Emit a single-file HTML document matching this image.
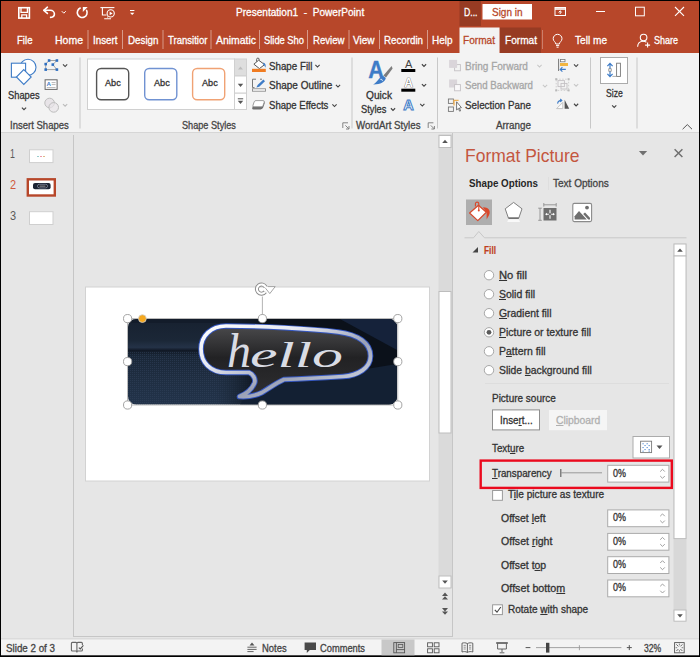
<!DOCTYPE html>
<html><head><meta charset="utf-8"><title>PowerPoint</title>
<style>
html,body{margin:0;padding:0;}
body{width:700px;height:657px;overflow:hidden;position:relative;background:#E6E6E6;font-family:"Liberation Sans",sans-serif;}
.t{position:absolute;white-space:pre;display:block;transform-origin:0 50%;-webkit-text-stroke:0.3px currentColor;}
.t u{text-decoration:underline;text-underline-offset:1px;text-decoration-thickness:1px;}
svg{position:absolute;left:0;top:0;}
</style></head><body>
<svg width="700" height="657" viewBox="0 0 700 657" font-family="Liberation Sans, sans-serif">
<rect x="0" y="0" width="700" height="657" fill="#000"/>
<rect x="1" y="1" width="698" height="654" fill="#E6E6E6"/>
<rect x="1" y="1" width="698" height="52" fill="#B7472A"/>
<rect x="459.5" y="1" width="21.5" height="25" fill="#973B23"/>
<rect x="482.5" y="4" width="49.5" height="15.5" fill="#fff"/>
<rect x="459.5" y="27.5" width="40" height="26" fill="#F3F3F3"/>
<rect x="500" y="27.5" width="41" height="25.5" fill="#973B23"/>
<rect x="87.5" y="30" width="1" height="19" fill="#fff" opacity="0.45"/>
<rect x="122.0" y="30" width="1" height="19" fill="#fff" opacity="0.45"/>
<rect x="162.5" y="30" width="1" height="19" fill="#fff" opacity="0.45"/>
<rect x="210.5" y="30" width="1" height="19" fill="#fff" opacity="0.45"/>
<rect x="259.0" y="30" width="1" height="19" fill="#fff" opacity="0.45"/>
<rect x="307.0" y="30" width="1" height="19" fill="#fff" opacity="0.45"/>
<rect x="348.5" y="30" width="1" height="19" fill="#fff" opacity="0.45"/>
<rect x="379.0" y="30" width="1" height="19" fill="#fff" opacity="0.45"/>
<rect x="427.0" y="30" width="1" height="19" fill="#fff" opacity="0.45"/>
<rect x="542" y="30" width="1" height="19" fill="#fff" opacity="0.3"/>
<rect x="1" y="53" width="698" height="79" fill="#F3F3F3"/>
<rect x="1" y="132" width="698" height="1" fill="#D6D6D6"/>
<rect x="79.5" y="57.5" width="1" height="71" fill="#C8C8C8"/>
<rect x="351.5" y="57.5" width="1" height="71" fill="#C8C8C8"/>
<rect x="437.0" y="57.5" width="1" height="71" fill="#C8C8C8"/>
<rect x="590.0" y="57.5" width="1" height="71" fill="#C8C8C8"/>
<rect x="636.5" y="57.5" width="1" height="71" fill="#C8C8C8"/>
<rect x="87.5" y="59" width="147" height="50.5" fill="#fff" stroke="#D0D0D0" stroke-width="1"/>
<rect x="96.60000000000001" y="68.5" width="32.1" height="31.2" rx="4.5" fill="#fff" stroke="#555" stroke-width="1.4"/>
<rect x="144.7" y="68.5" width="32.1" height="31.2" rx="4.5" fill="#fff" stroke="#7092D2" stroke-width="1.4"/>
<rect x="192.6" y="68.5" width="32.1" height="31.2" rx="4.5" fill="#fff" stroke="#F0A274" stroke-width="1.4"/>
<rect x="234.5" y="59" width="12" height="17" fill="#DEDEDE" stroke="#D0D0D0" stroke-width="1"/>
<rect x="234.5" y="76" width="12" height="17.2" fill="#fff" stroke="#D0D0D0" stroke-width="1"/>
<rect x="234.5" y="93.2" width="12" height="16.3" fill="#fff" stroke="#D0D0D0" stroke-width="1"/>
<path d="M238 69.5 L240.5 66.5 L243 69.5 Z" fill="#BDBDBD"/>
<path d="M237.8 83.8 L243.2 83.8 L240.5 87 Z" fill="#555"/>
<rect x="237.8" y="98.3" width="5.4" height="1" fill="#555"/><path d="M237.8 100.8 L243.2 100.8 L240.5 104 Z" fill="#555"/>
<rect x="600.5" y="57.5" width="27" height="26" fill="#fff" stroke="#ABABAB" stroke-width="1"/>
<rect x="73" y="135" width="1" height="502" fill="#C6C6C6"/>
<rect x="74" y="636" width="379" height="1" fill="#C6C6C6"/>
<rect x="452" y="133" width="1" height="504" fill="#C6C6C6"/>
<rect x="29.5" y="149.8" width="23.5" height="12.8" fill="#fff" stroke="#CFCFCF"/>
<rect x="37" y="156" width="2" height="1" fill="#9cc"/><rect x="40" y="156" width="2" height="1" fill="#e9a"/><rect x="43" y="156" width="2" height="1" fill="#db8"/>
<rect x="27.8" y="179.3" width="27" height="16.2" fill="#fff" stroke="#B7472A" stroke-width="2.4"/>
<rect x="33" y="183" width="17.6" height="6.2" rx="2" fill="#1C2433"/>
<rect x="37.5" y="184.3" width="10" height="3.6" rx="1.8" fill="#15181f" stroke="#aab2cc" stroke-width="0.6"/><rect x="39.5" y="185.6" width="6" height="1" fill="#b8bcc8" opacity="0.8"/>
<rect x="29.5" y="211.7" width="23.5" height="12.8" fill="#fff" stroke="#CFCFCF"/>
<rect x="85.5" y="287" width="344" height="194" fill="#fff" stroke="#D2D2D2"/>
<rect x="438.5" y="134" width="13.5" height="454" fill="#DADADA"/>
<rect x="439" y="135.5" width="12" height="12" fill="#fff" stroke="#BEBEBE"/>
<path d="M442.2 143 L447.8 143 L445 139.8 Z" fill="#555"/>
<rect x="439" y="291.5" width="12" height="141.5" fill="#fff" stroke="#BDBDBD"/>
<rect x="439" y="576" width="12" height="12" fill="#fff" stroke="#BEBEBE"/>
<path d="M442.2 580.5 L447.8 580.5 L445 583.8 Z" fill="#555"/>
<path d="M442 596 L445 592.6 L448 596 Z M442 599.6 L445 596.2 L448 599.6 Z" fill="#555"/>
<path d="M442 608 L445 611.4 L448 608 Z M442 611.4 L445 614.8 L448 611.4 Z" fill="#555"/>
<rect x="466" y="199.5" width="26" height="25.5" fill="#AEAEAE"/>
<path d="M464.5 237.8 H473.5 L478.8 231.5 L484.5 237.8 H686.5" fill="none" stroke="#C8C8C8" stroke-width="1"/>
<rect x="548" y="177" width="1" height="13" fill="#DEDEDE"/>
<path d="M478 247 V252.5 H472.5 Z" fill="#444"/>
<rect x="673.5" y="243.5" width="13" height="377" fill="#D8D8D8"/>
<rect x="674" y="244" width="12" height="12" fill="#fff" stroke="#BEBEBE"/>
<path d="M677.2 251.8 L682.8 251.8 L680 248.6 Z" fill="#555"/>
<rect x="674" y="256" width="12" height="282.6" fill="#fff" stroke="#BEBEBE"/>
<rect x="674" y="610" width="12" height="11.2" fill="#fff" stroke="#BEBEBE"/>
<path d="M677.2 614.2 L682.8 614.2 L680 617.4 Z" fill="#555"/>
<circle cx="489" cy="275.2" r="4.7" fill="#fff" stroke="#A8A8A8" stroke-width="1"/>
<circle cx="489" cy="294.2" r="4.7" fill="#fff" stroke="#A8A8A8" stroke-width="1"/>
<circle cx="489" cy="313.2" r="4.7" fill="#fff" stroke="#A8A8A8" stroke-width="1"/>
<circle cx="489" cy="332.3" r="4.7" fill="#fff" stroke="#A8A8A8" stroke-width="1"/>
<circle cx="489" cy="351.3" r="4.7" fill="#fff" stroke="#A8A8A8" stroke-width="1"/>
<circle cx="489" cy="370.2" r="4.7" fill="#fff" stroke="#A8A8A8" stroke-width="1"/>
<circle cx="489" cy="332.3" r="2.4" fill="#5A5A5A"/>
<rect x="485" y="383" width="184" height="1" fill="#DDDDDD"/>
<rect x="492.5" y="409.9" width="47" height="20" fill="#fff" stroke="#8E8E8E"/>
<rect x="549" y="410" width="58" height="20.2" fill="#F5F5F5"/>
<rect x="633" y="436.5" width="36.5" height="21.5" fill="#fff" stroke="#ABABAB"/>
<path d="M656.5 445.5 L662.5 445.5 L659.5 449 Z" fill="#555"/>
<rect x="607.7" y="465.3" width="61.2" height="16.8" fill="#fff" stroke="#ABABAB"/>
<path d="M660.2 471.6 L662.5 469.3 L664.8 471.6" fill="none" stroke="#959595" stroke-width="0.9"/>
<path d="M660.2 476.0 L662.5 478.3 L664.8 476.0" fill="none" stroke="#959595" stroke-width="0.9"/>
<rect x="607.7" y="509.9" width="61.2" height="16.8" fill="#fff" stroke="#ABABAB"/>
<path d="M660.2 516.1999999999999 L662.5 513.9 L664.8 516.1999999999999" fill="none" stroke="#959595" stroke-width="0.9"/>
<path d="M660.2 520.6 L662.5 522.9 L664.8 520.6" fill="none" stroke="#959595" stroke-width="0.9"/>
<rect x="607.7" y="533.4" width="61.2" height="16.8" fill="#fff" stroke="#ABABAB"/>
<path d="M660.2 539.6999999999999 L662.5 537.4 L664.8 539.6999999999999" fill="none" stroke="#959595" stroke-width="0.9"/>
<path d="M660.2 544.1 L662.5 546.4 L664.8 544.1" fill="none" stroke="#959595" stroke-width="0.9"/>
<rect x="607.7" y="556.7" width="61.2" height="16.8" fill="#fff" stroke="#ABABAB"/>
<path d="M660.2 563.0 L662.5 560.7 L664.8 563.0" fill="none" stroke="#959595" stroke-width="0.9"/>
<path d="M660.2 567.4000000000001 L662.5 569.7 L664.8 567.4000000000001" fill="none" stroke="#959595" stroke-width="0.9"/>
<rect x="607.7" y="580.0" width="61.2" height="16.8" fill="#fff" stroke="#ABABAB"/>
<path d="M660.2 586.3 L662.5 584.0 L664.8 586.3" fill="none" stroke="#959595" stroke-width="0.9"/>
<path d="M660.2 590.7 L662.5 593.0 L664.8 590.7" fill="none" stroke="#959595" stroke-width="0.9"/>
<rect x="560.2" y="469" width="1.2" height="8" fill="#666"/><rect x="561" y="472.3" width="41" height="1" fill="#999"/>
<rect x="492.6" y="490.5" width="9.8" height="9.8" fill="#fff" stroke="#9A9A9A"/>
<rect x="492.6" y="604.8" width="9.8" height="9.8" fill="#fff" stroke="#9A9A9A"/>
<path d="M494.8 609.8 L497 612.2 L500.8 607" fill="none" stroke="#444" stroke-width="1.1"/>
<rect x="480.7" y="460.6" width="191.1" height="27.3" fill="none" stroke="#EB0A1E" stroke-width="2.4"/>
<rect x="1" y="638.5" width="698" height="1" fill="#CFCFCF"/>
<rect x="1" y="639.5" width="698" height="15.8" fill="#F3F3F3"/>
<rect x="381.5" y="639.5" width="33" height="15.8" fill="#C8C8C8"/>
<g stroke="#fff" fill="none" stroke-width="1.6"><rect x="18.8" y="7.7" width="10.6" height="10.4"/><path d="M21 7.7 V12.3 H27.4 V7.7" stroke-width="1.3"/><path d="M21.8 18.2 V14.8 H26.6 V18.2" stroke-width="1.3"/></g>
<g stroke="#fff" fill="none" stroke-width="1.6" stroke-linecap="round" stroke-linejoin="round"><path d="M47.4 7.2 L43.8 10.3 L47.4 13.4"/><path d="M44 10.3 H50.2 C53 10.3 54.4 12.2 54.4 13.9 C54.4 15.8 52.8 17.1 50.6 17.4"/></g>
<path d="M61.8 11.2 L63.8 13.2 L65.8 11.2" stroke="#fff" fill="none" stroke-width="1"/>
<path d="M80.2 8.1 A4.9 4.9 0 1 0 86.6 10.4" stroke="#fff" fill="none" stroke-width="1.6" stroke-linecap="round"/><path d="M82.8 7.1 H87.7 L82.8 11.9 Z" fill="#fff"/>
<g stroke="#fff" fill="none" stroke-width="1.1"><path d="M100.4 7.6 H114.4"/><path d="M102.4 7.6 V15 H106.6"/><circle cx="110.7" cy="13.4" r="3.6"/><path d="M107.6 16.6 V17.6 M104.2 18.8 H111"/></g><path d="M109.6 11.5 L112.6 13.4 L109.6 15.3 Z" fill="#fff"/>
<rect x="130" y="10" width="4.4" height="1" fill="#fff"/><path d="M130 12.7 H134.4 L132.2 15 Z" fill="#fff"/>
<g stroke="#fff" fill="none" stroke-width="1"><rect x="555" y="7.5" width="10.5" height="8"/><path d="M555 9 H565.5" stroke-width="1.6"/><path d="M560.2 14 V11 M558.6 12.4 L560.2 10.8 L561.8 12.4"/></g>
<path d="M596 11.5 H605" stroke="#fff" fill="none" stroke-width="1"/>
<rect x="635.5" y="7.2" width="8.8" height="8.6" stroke="#fff" fill="none" stroke-width="1"/>
<path d="M675 7 L684 15.8 M684 7 L675 15.8" stroke="#fff" fill="none" stroke-width="1.1"/>
<g stroke="#fff" fill="none" stroke-width="1"><path d="M555.8 44 C555.8 42 553.2 41.3 553.2 38.7 A4.4 4.4 0 0 1 562 38.7 C562 41.3 559.4 42 559.4 44 Z"/><path d="M556 45.6 H559.2 M556.6 47.2 H558.6"/></g>
<g stroke="#fff" fill="none" stroke-width="1.1"><circle cx="643.6" cy="37.6" r="3.3"/><path d="M637.6 46.8 C637.8 42.8 640.5 41.3 643.2 41.3 C644.6 41.3 645.6 41.6 646.4 42.2"/><path d="M647.6 42.6 V47.6 M645.1 45.1 H650.1"/></g>
<g fill="#fff" stroke="#3E7CC7" stroke-width="1.1"><circle cx="28" cy="67.3" r="8"/><rect x="11.4" y="63.2" width="14.2" height="14"/><path d="M23.8 69.6 L31.2 77 L23.8 84.4 L16.4 77 Z"/></g>
<path d="M21.9 107.65 L24 109.75 L26.1 107.65" fill="none" stroke="#444" stroke-width="1.15"/>
<path d="M49.1 60.5 H56.9 L52.8 64.6 L56.9 69.6 H45.7 V64.1 Z" fill="none" stroke="#9A9A9A" stroke-width="0.9"/>
<rect x="47.800000000000004" y="59.2" width="2.6" height="2.6" fill="#2F6FC0"/>
<rect x="55.6" y="59.2" width="2.6" height="2.6" fill="#2F6FC0"/>
<rect x="44.400000000000006" y="62.8" width="2.6" height="2.6" fill="#2F6FC0"/>
<rect x="51.5" y="63.3" width="2.6" height="2.6" fill="#2F6FC0"/>
<rect x="44.400000000000006" y="68.3" width="2.6" height="2.6" fill="#2F6FC0"/>
<rect x="55.6" y="68.3" width="2.6" height="2.6" fill="#2F6FC0"/>
<path d="M62.99999999999999 64.45 L65.1 66.55 L67.19999999999999 64.45" fill="none" stroke="#444" stroke-width="1.15"/>
<rect x="45.1" y="79.8" width="12" height="9.6" fill="#fff" stroke="#666" stroke-width="1"/>
<text x="46.4" y="86" font-size="6.2" font-weight="bold" fill="#3E7CC7">A</text>
<path d="M51.6 82.6 H55.6 M51.6 84.6 H55.6 M46.8 87.6 H55.6" stroke="#9a9a9a" stroke-width="0.7"/>
<circle cx="49.6" cy="103" r="4.8" fill="#E8E4E8" stroke="#BDBDBD"/><circle cx="53.7" cy="107.4" r="4.8" fill="#E8E4E8" fill-opacity="0.7" stroke="#BDBDBD"/>
<path d="M62.99999999999999 104.05 L65.1 106.14999999999999 L67.19999999999999 104.05" fill="none" stroke="#BDBDBD" stroke-width="1.15"/>
<path d="M258.6 60.2 L264.6 64.6 L259.4 68.6 L253.9 64.2 Z" fill="#fff" stroke="#555" stroke-width="1"/>
<path d="M256.6 61.6 V59.4 A1.3 1.3 0 0 1 259.2 59.4 V60.4" fill="none" stroke="#555" stroke-width="0.9"/>
<path d="M263.2 62.6 C265.6 63.2 266.2 65.4 265.4 67.8 C264.8 66 264.4 65.4 263.4 65 Z" fill="#3E7CC7"/>
<rect x="252" y="68.8" width="13.8" height="3.2" fill="#F07C22"/>
<path d="M315.4 64.95 L317.5 67.05 L319.6 64.95" fill="none" stroke="#444" stroke-width="1.15"/>
<path d="M256 79.2 H252.5 V87.6 H254.5" fill="none" stroke="#777" stroke-width="1"/><path d="M262 79.2 H260" stroke="#777" stroke-width="1"/>
<rect x="252.5" y="88.8" width="13" height="2.4" fill="#fff" stroke="#8A8A8A" stroke-width="0.9"/>
<path d="M257.6 85 L263.4 79.6 L265 81.2 L259.2 86.8 L256.4 87.6 Z" fill="#3E7CC7"/>
<path d="M335.9 84.95 L338 87.05 L340.1 84.95" fill="none" stroke="#444" stroke-width="1.15"/>
<path d="M256 101.6 H263 Q265.2 101.6 264.6 103.6 L263.2 107.6 Q262.6 109.4 260.6 109.4 H253.6 Q251.6 109.4 252.4 107.4 L253.8 103.4 Q254.4 101.6 256 101.6 Z" fill="#6E6E6E"/>
<path d="M256 100.6 H263 Q264.8 100.6 264.2 102.2 L263 105.6 Q262.6 106.8 261.2 106.8 H254 Q252.4 106.8 253 105.2 L254.2 101.8 Q254.6 100.6 256 100.6 Z" fill="#fff" stroke="#8A8A8A" stroke-width="0.8"/>
<path d="M332.4 104.45 L334.5 106.55 L336.6 104.45" fill="none" stroke="#444" stroke-width="1.15"/>
<path d="M342.8 128.0 V122.8 H348.0" fill="none" stroke="#777" stroke-width="0.9"/><path d="M345.40000000000003 125.39999999999999 L348.8 128.8 M349.0 126.0 V129.0 H346.0" fill="none" stroke="#777" stroke-width="0.9"/>
<path d="M428.2 128.0 V122.8 H433.4" fill="none" stroke="#777" stroke-width="0.9"/><path d="M430.8 125.39999999999999 L434.2 128.8 M434.4 126.0 V129.0 H431.4" fill="none" stroke="#777" stroke-width="0.9"/>
<text x="368.2" y="77.6" font-size="24.5" font-weight="bold" fill="#3E7CC7" stroke="#3E7CC7" stroke-width="0.4" textLength="15.6" lengthAdjust="spacingAndGlyphs">A</text>
<path d="M391.6 66 L392.6 68.4 L386 77.4 L383.4 75.4 Z" fill="#7d7d7d"/>
<path d="M383 75.8 L385.8 78 C385 82 380 84.6 373.2 84.4 C377.6 82.4 379 77.2 383 75.8 Z" fill="#3E7CC7"/>
<path d="M380.4 79.4 C381.4 79 382.4 79.6 382.4 80.8" fill="none" stroke="#fff" stroke-width="0.9"/>
<path d="M390.9 108.25 L393 110.35 L395.1 108.25" fill="none" stroke="#444" stroke-width="1.15"/>
<text x="408.7" y="68.4" font-size="11" fill="#444" text-anchor="middle">A</text>
<rect x="401.3" y="69" width="14" height="3" fill="#000"/>
<path d="M421.9 64.25 L424 66.35 L426.1 64.25" fill="none" stroke="#444" stroke-width="1.15"/>
<text x="408.7" y="87.2" font-size="12" fill="#fff" stroke="#555" stroke-width="0.7" text-anchor="middle" font-weight="bold" paint-order="stroke">A</text>
<rect x="401.3" y="88.7" width="14" height="3" fill="#000"/>
<path d="M421.9 84.15 L424 86.25 L426.1 84.15" fill="none" stroke="#444" stroke-width="1.15"/>
<text x="408.5" y="109.6" font-size="14.5" fill="#fff" stroke="#3E7CC7" stroke-width="1" text-anchor="middle" font-weight="bold">A</text>
<path d="M420.2 103.95 L422.3 106.05 L424.40000000000003 103.95" fill="none" stroke="#444" stroke-width="1.15"/>
<rect x="454.6" y="64.6" width="5.8" height="6.2" fill="#F3F3F3" stroke="#C4C0C4" stroke-width="0.9"/><rect x="449.1" y="59.9" width="8" height="8" fill="#DAD5DA"/>
<path d="M537.4 64.95 L539.5 67.05 L541.6 64.95" fill="none" stroke="#C8C8C8" stroke-width="1.15"/>
<rect x="449.1" y="79.5" width="8" height="8" fill="#DAD5DA"/><rect x="454.6" y="84.6" width="5.8" height="6.2" fill="#FAF8FA" stroke="#C4C0C4" stroke-width="0.9"/>
<path d="M542.9 84.95 L545 87.05 L547.1 84.95" fill="none" stroke="#C8C8C8" stroke-width="1.15"/>
<rect x="448.4" y="99" width="5" height="4.4" fill="none" stroke="#777" stroke-width="0.9"/><rect x="448.4" y="107" width="5" height="4.4" fill="none" stroke="#777" stroke-width="0.9"/>
<path d="M454 105.4 V100.4 H458.6" fill="none" stroke="#F0B050" stroke-width="1.3"/>
<path d="M456.6 101.8 V110 L458.4 108.4 L459.6 111.2 L460.6 110.8 L459.4 108 L461.4 107.6 Z" fill="#fff" stroke="#555" stroke-width="0.8"/>
<path d="M558.6 58.8 V71" stroke="#777" stroke-width="1"/>
<rect x="560.4" y="59.4" width="4.6" height="2.4" fill="#fff" stroke="#777" stroke-width="0.8"/>
<rect x="560" y="63" width="8" height="3" fill="#F2B541"/>
<path d="M560.2 69.4 H565.8 M562.4 67.2 L560.2 69.4 L562.4 71.6" fill="none" stroke="#3E7CC7" stroke-width="1.1"/>
<path d="M574.0 64.45 L576.1 66.55 L578.2 64.45" fill="none" stroke="#444" stroke-width="1.15"/>
<g fill="none" stroke="#C4C0C4" stroke-width="0.9"><rect x="558" y="80.6" width="6.4" height="6"/><rect x="561" y="83.4" width="6" height="5.6"/></g>
<path d="M556.2 79.2 H568.6 V90.4 H556.2 Z" fill="none" stroke="#C8C8C8" stroke-width="0.8" stroke-dasharray="1.5 1.5"/>
<rect x="555.2" y="78.2" width="2" height="2" fill="#B8B8B8"/>
<rect x="567.6" y="78.2" width="2" height="2" fill="#B8B8B8"/>
<rect x="555.2" y="89.4" width="2" height="2" fill="#B8B8B8"/>
<rect x="567.6" y="89.4" width="2" height="2" fill="#B8B8B8"/>
<path d="M574.0 84.05 L576.1 86.14999999999999 L578.2 84.05" fill="none" stroke="#C8C8C8" stroke-width="1.15"/>
<path d="M564.6 99.8 V108.8 H569.2 Z" fill="#555"/>
<path d="M562.8 102.4 V108.6 H556.6 Z" fill="#fff" stroke="#BDBDBD" stroke-width="0.9"/>
<path d="M557.6 103.6 C557.8 101.6 559.4 100.4 561.6 100.4 M560.2 99 L561.8 100.4 L560.2 101.8" fill="none" stroke="#3E7CC7" stroke-width="1.1"/>
<path d="M574.0 103.75 L576.1 105.85 L578.2 103.75" fill="none" stroke="#444" stroke-width="1.15"/>
<path d="M610 63.6 V76.4 M607.4 66.2 L610 63.4 L612.6 66.2 M607.4 73.8 L610 76.6 L612.6 73.8" fill="none" stroke="#3E7CC7" stroke-width="1.2"/>
<rect x="608.8" y="68.8" width="2.4" height="2.4" fill="#fff" stroke="#777" stroke-width="0.7"/>
<rect x="616.6" y="63.2" width="3.8" height="13.2" fill="#fff" stroke="#777" stroke-width="0.9"/><path d="M612.4 76.4 H616.6" stroke="#999" stroke-width="0.8"/>
<path d="M612.1 105.35000000000001 L614.2 107.45 L616.3000000000001 105.35000000000001" fill="none" stroke="#444" stroke-width="1.15"/>
<path d="M682.6 129.2 L687.3 124.6 L692 129.2" fill="none" stroke="#555" stroke-width="1"/>
<defs>
<clipPath id="pc"><rect x="128" y="319" width="269" height="85.5" rx="8"/></clipPath>
<linearGradient id="bgv" x1="0" y1="0" x2="0" y2="1"><stop offset="0" stop-color="#172130"/><stop offset="0.25" stop-color="#1B2737"/><stop offset="0.33" stop-color="#243247"/><stop offset="0.365" stop-color="#111926"/><stop offset="0.43" stop-color="#1A2738"/><stop offset="0.7" stop-color="#1F2E42"/><stop offset="1" stop-color="#22334A"/></linearGradient>
<linearGradient id="bgl" x1="0" y1="0" x2="1" y2="0"><stop offset="0" stop-color="#1C2939" stop-opacity="0"/><stop offset="1" stop-color="#0B111A"/></linearGradient>
<linearGradient id="bub" x1="0" y1="0" x2="0" y2="1"><stop offset="0" stop-color="#4a4a4c"/><stop offset="0.45" stop-color="#222224"/><stop offset="1" stop-color="#2e2e30"/></linearGradient>
<linearGradient id="sil" x1="0" y1="0" x2="1" y2="1"><stop offset="0" stop-color="#ffffff"/><stop offset="0.3" stop-color="#e6e9f2"/><stop offset="0.6" stop-color="#9aa1b6"/><stop offset="1" stop-color="#e4e7f0"/></linearGradient>
<pattern id="dots" width="2" height="2" patternUnits="userSpaceOnUse"><rect width="1" height="1" fill="#31415a" opacity="0.55"/></pattern>
</defs>
<g clip-path="url(#pc)">
<rect x="128" y="319" width="269" height="86" fill="url(#bgv)"/>
<rect x="128" y="352" width="269" height="53" fill="url(#dots)"/>
<rect x="215" y="319" width="45" height="86" fill="url(#bgl)"/>
<rect x="260" y="319" width="137" height="86" fill="#0B111A"/>
<path d="M240 405 L250 388 L397 364 V405 Z" fill="#132033"/>
<path d="M340 319 H397 V350 Z" fill="#15223A"/>
<path d="M128 319 H260 V323 H128 Z" fill="#111926" opacity="0.6"/>
<path d="M226 326 C260 326 310 328.5 338 332 C358 334.5 370.5 343 370.5 356 C370.5 368 358 375.5 343 376.5 C320 378 300 379 284 379.5 C276 383 268 389 262 392.5 C256 395.5 247 397 239.5 396.5 C246 394 252 389 254.5 383 C256 379 253 374 249 372.5 H226 C210 372.5 201 362 201 349 C201 336 211 326 226 326 Z" fill="url(#bub)" stroke="#3557c0" stroke-width="5.6" stroke-linejoin="round"/>
<path d="M226 326 C260 326 310 328.5 338 332 C358 334.5 370.5 343 370.5 356 C370.5 368 358 375.5 343 376.5 C320 378 300 379 284 379.5 C276 383 268 389 262 392.5 C256 395.5 247 397 239.5 396.5 C246 394 252 389 254.5 383 C256 379 253 374 249 372.5 H226 C210 372.5 201 362 201 349 C201 336 211 326 226 326 Z" fill="none" stroke="url(#sil)" stroke-width="3.7" stroke-linejoin="round"/>
<text x="227" y="366.5" font-family="Liberation Serif, serif" font-style="italic" fill="#d9dce4"><tspan font-size="48">h</tspan><tspan font-size="36" dx="-1" textLength="93" lengthAdjust="spacingAndGlyphs">ello</tspan></text>
</g>
<rect x="127.6" y="318.6" width="270.2" height="86.4" fill="none" stroke="#ABABAB" stroke-width="0.8"/>
<path d="M262.4 296.5 V315" stroke="#ABABAB" stroke-width="0.9"/>
<circle cx="127.6" cy="318.6" r="4.1" fill="#fff" stroke="#9A9A9A" stroke-width="0.9"/>
<circle cx="262.4" cy="318.6" r="4.1" fill="#fff" stroke="#9A9A9A" stroke-width="0.9"/>
<circle cx="397.8" cy="318.6" r="4.1" fill="#fff" stroke="#9A9A9A" stroke-width="0.9"/>
<circle cx="127.6" cy="361.6" r="4.1" fill="#fff" stroke="#9A9A9A" stroke-width="0.9"/>
<circle cx="397.8" cy="361.6" r="4.1" fill="#fff" stroke="#9A9A9A" stroke-width="0.9"/>
<circle cx="127.6" cy="405" r="4.1" fill="#fff" stroke="#9A9A9A" stroke-width="0.9"/>
<circle cx="262.4" cy="405" r="4.1" fill="#fff" stroke="#9A9A9A" stroke-width="0.9"/>
<circle cx="397.8" cy="405" r="4.1" fill="#fff" stroke="#9A9A9A" stroke-width="0.9"/>
<circle cx="142.4" cy="318.6" r="3.9" fill="#F5A81E" stroke="#CFCFCF" stroke-width="0.8"/>
<path d="M265.2 291.8 A4.6 4.6 0 1 1 265.6 287" fill="none" stroke="#8C8C8C" stroke-width="4"/>
<path d="M264.2 286.6 H275.2 L269.8 293.6 Z" fill="#fff" stroke="#9A9A9A" stroke-width="0.9" stroke-linejoin="round"/>
<path d="M265.2 291.8 A4.6 4.6 0 1 1 265.6 287" fill="none" stroke="#fff" stroke-width="2.1"/>
<path d="M265.2 287.4 H268" stroke="#fff" stroke-width="1.6"/>
<path d="M478.5 205.2 L486.3 212.2 L477.8 220.6 L469.6 213 Z" fill="#fff" stroke="#D9482B" stroke-width="1.2" stroke-linejoin="round"/>
<path d="M475.4 206.4 V203.8 A1.7 1.7 0 0 1 478.8 203.8 V210" fill="none" stroke="#D9482B" stroke-width="1.1"/><circle cx="478.8" cy="210.4" r="1" fill="#D9482B"/>
<path d="M483 207.4 C487.4 207 490.4 210 489.6 213.6 C489 216.4 487.4 217.6 486.8 219.6 C486.4 216.8 486.8 214.4 486.6 212.4 Z" fill="#D9482B"/>
<path d="M513.6 202.4 L522 208.8 L518.8 218 H508.4 L505.2 208.8 Z" fill="#fff" stroke="#808080" stroke-width="1" stroke-linejoin="round"/>
<path d="M508.4 218.2 H518.8" stroke="#666" stroke-width="1.3"/>
<path d="M508.4 219.2 H518.8 L520 222 H507.2 Z" fill="#fff" opacity="0.75"/>
<rect x="543.5" y="208" width="13" height="12.5" fill="#6E6E6E"/>
<path d="M545.6 214.2 H554.4 M550 209.8 V218.8" stroke="#fff" stroke-width="1.1"/><path d="M547 212.8 L545.4 214.2 L547 215.6 Z M553 212.8 L554.6 214.2 L553 215.6 Z" fill="#fff"/>
<rect x="548.8" y="213.2" width="2.4" height="2" fill="#6E6E6E"/>
<path d="M543.8 204.8 H556.2 M543.8 203 V206.6 M556.2 203 V206.6" stroke="#8E8E8E" stroke-width="0.9"/>
<path d="M540 208.2 V220.3 M538.2 208.2 H541.8 M538.2 220.3 H541.8" stroke="#8E8E8E" stroke-width="0.9"/>
<rect x="572.8" y="203.4" width="18.8" height="18.2" rx="1.5" fill="#fff" stroke="#8A8A8A" stroke-width="1.1"/>
<path d="M574.6 219.6 V216.2 L579 211 L586.8 219.6 Z" fill="#6E6E6E"/><path d="M583.2 214 L585 212.6 L590 217.8 V219.6 H588.2 Z" fill="#6E6E6E"/>
<circle cx="587" cy="207.6" r="1.9" fill="#6E6E6E"/>
<path d="M638.9 151 H647.2 L643 155.6 Z" fill="#707070"/>
<path d="M674.6 149.2 L682.4 157 M682.4 149.2 L674.6 157" stroke="#707070" stroke-width="1.5"/>
<rect x="640.6" y="441.2" width="11" height="11.4" fill="#fff" stroke="#7A7A7A" stroke-width="0.9"/>
<rect x="642.5" y="443.2" width="1.1" height="1.1" fill="#4A86D0"/>
<rect x="644.5" y="445" width="1.1" height="1.1" fill="#4A86D0"/>
<rect x="646.6" y="447" width="1.1" height="1.1" fill="#4A86D0"/>
<rect x="648.6" y="449" width="1.1" height="1.1" fill="#4A86D0"/>
<rect x="642.5" y="447" width="1.1" height="1.1" fill="#4A86D0"/>
<rect x="644.5" y="449" width="1.1" height="1.1" fill="#4A86D0"/>
<rect x="646.6" y="443.2" width="1.1" height="1.1" fill="#4A86D0"/>
<rect x="648.6" y="445" width="1.1" height="1.1" fill="#4A86D0"/>
<rect x="642.5" y="450.6" width="1.1" height="1.1" fill="#4A86D0"/>
<rect x="648.6" y="450.6" width="1.1" height="1.1" fill="#4A86D0"/>
<path d="M76.9 643.4 Q76.9 642.4 75.9 642.4 H72.4 Q71.4 642.4 71.4 643.4 V650 Q71.4 651 72.4 651 H75.9 Q76.9 651 76.9 652.4 Q76.9 651 77.9 651 H81.4 Q82.4 651 82.4 650 V648.6 M82.4 645 V643.4 Q82.4 642.4 81.4 642.4 H77.9 Q76.9 642.4 76.9 643.4 V652" fill="none" stroke="#666" stroke-width="1.1"/>
<path d="M78.8 647.6 L80.3 648.9 L83.4 645.4" fill="none" stroke="#555" stroke-width="1.1"/>
<path d="M249.5 645.4 L252 642.6 L254.5 645.4 Z" fill="#555"/><path d="M247.4 647.2 H256.6 M247.4 649.4 H256.6 M247.4 651.6 H253.6" stroke="#555" stroke-width="0.9"/>
<path d="M304.6 642.6 H316 V650 H309.8 L306.8 653 V650 H304.6 Z" fill="#4A4A4A"/>
<rect x="393.8" y="642.6" width="10.8" height="10.2" fill="none" stroke="#555" stroke-width="0.9"/><path d="M396.4 642.6 V652.8 M396.4 649.6 H404.6" stroke="#555" stroke-width="0.9"/><rect x="398.2" y="644.6" width="4.6" height="3" fill="none" stroke="#555" stroke-width="0.8"/>
<rect x="427.6" y="642.8" width="4.8" height="4" fill="none" stroke="#555" stroke-width="0.9"/>
<rect x="434.2" y="642.8" width="4.8" height="4" fill="none" stroke="#555" stroke-width="0.9"/>
<rect x="427.6" y="648.8" width="4.8" height="4" fill="none" stroke="#555" stroke-width="0.9"/>
<rect x="434.2" y="648.8" width="4.8" height="4" fill="none" stroke="#555" stroke-width="0.9"/>
<path d="M467.4 643.6 C465.6 642.6 463.8 642.6 462 643.2 V652 C463.8 651.4 465.6 651.4 467.4 652.4 C469.2 651.4 471 651.4 472.8 652 V643.2 C471 642.6 469.2 642.6 467.4 643.6 Z M467.4 643.6 V652.4" fill="none" stroke="#555" stroke-width="0.9"/><path d="M463.6 645.4 H465.8 M463.6 647.2 H465.8 M463.6 649 H465.8 M469 645.4 H471.2 M469 647.2 H471.2 M469 649 H471.2" stroke="#555" stroke-width="0.6"/>
<path d="M496.2 643 H507.8" stroke="#555" stroke-width="1.6"/><path d="M497.6 643.6 V649 H506.4 V643.6" fill="none" stroke="#555" stroke-width="0.9"/><path d="M502 649 V652 M499.6 652.8 H504.4" stroke="#555" stroke-width="0.9"/>
<path d="M525.6 647.6 H530.4" stroke="#555" stroke-width="1"/>
<rect x="536" y="647.2" width="85.4" height="0.9" fill="#9A9A9A"/><rect x="578.9" y="645.2" width="0.9" height="5" fill="#9A9A9A"/>
<rect x="546" y="642.8" width="3.4" height="9.8" fill="#444"/>
<path d="M626.8 647.6 H631.8 M629.3 645.1 V650.1" stroke="#555" stroke-width="1"/>
<rect x="674.6" y="642.6" width="9.6" height="10.2" fill="none" stroke="#555" stroke-width="0.9"/><path d="M676.4 644.4 L678.4 646.4 M682.4 644.4 L680.4 646.4 M676.4 651 L678.4 649 M682.4 651 L680.4 649" stroke="#555" stroke-width="0.9"/><path d="M679.4 643.6 V645.4 M679.4 650 V651.8 M675.6 647.7 H677.2 M681.6 647.7 H683.2" stroke="#555" stroke-width="0.7"/>
</svg>
<span class="t" id="t0" style="left:236px;top:6px;font-size:11px;line-height:12px;height:12px;color:#fff;transform:scaleX(0.9155);">Presentation1  -  PowerPoint</span>
<span class="t" id="t1" style="left:464px;top:6px;font-size:11px;line-height:12px;height:12px;color:#fff;transform:scaleX(0.7883);">D...</span>
<span class="t" id="t2" style="left:492px;top:6px;font-size:11.5px;line-height:12px;height:12px;color:#B7472A;transform:scaleX(0.8672);">Sign in</span>
<span class="t" id="t3" style="left:16.5px;top:34px;font-size:11px;line-height:12px;height:12px;color:#fff;transform:scaleX(0.874);">File</span>
<span class="t" id="t4" style="left:55px;top:34px;font-size:11px;line-height:12px;height:12px;color:#fff;transform:scaleX(0.9542);">Home</span>
<span class="t" id="t5" style="left:93px;top:34px;font-size:11px;line-height:12px;height:12px;color:#fff;transform:scaleX(0.8904);">Insert</span>
<span class="t" id="t6" style="left:127.5px;top:34px;font-size:11px;line-height:12px;height:12px;color:#fff;transform:scaleX(0.8905);">Design</span>
<span class="t" id="t7" style="left:167.5px;top:34px;font-size:11px;line-height:12px;height:12px;color:#fff;transform:scaleX(0.8693);">Transitior</span>
<span class="t" id="t8" style="left:215.5px;top:34px;font-size:11px;line-height:12px;height:12px;color:#fff;transform:scaleX(0.9481);">Animatic</span>
<span class="t" id="t9" style="left:264px;top:34px;font-size:11px;line-height:12px;height:12px;color:#fff;transform:scaleX(0.8494);">Slide Sho</span>
<span class="t" id="t10" style="left:312.5px;top:34px;font-size:11px;line-height:12px;height:12px;color:#fff;transform:scaleX(0.8731);">Review</span>
<span class="t" id="t11" style="left:353px;top:34px;font-size:11px;line-height:12px;height:12px;color:#fff;transform:scaleX(0.9089);">View</span>
<span class="t" id="t12" style="left:384px;top:34px;font-size:11px;line-height:12px;height:12px;color:#fff;transform:scaleX(0.8857);">Recordin</span>
<span class="t" id="t13" style="left:432px;top:34px;font-size:11px;line-height:12px;height:12px;color:#fff;transform:scaleX(0.9061);">Help</span>
<span class="t" id="t14" style="left:463px;top:34px;font-size:11px;line-height:12px;height:12px;color:#B7472A;transform:scaleX(0.9184);">Format</span>
<span class="t" id="t15" style="left:505px;top:34px;font-size:11px;line-height:12px;height:12px;color:#fff;transform:scaleX(0.9184);">Format</span>
<span class="t" id="t16" style="left:575px;top:34px;font-size:11px;line-height:12px;height:12px;color:#fff;transform:scaleX(0.9184);">Tell me</span>
<span class="t" id="t17" style="left:654px;top:34px;font-size:11px;line-height:12px;height:12px;color:#fff;transform:scaleX(0.8175);">Share</span>
<span class="t" id="t18" style="left:7.8px;top:89px;font-size:10.7px;line-height:12px;height:12px;color:#333;transform:scaleX(0.8717);">Shapes</span>
<span class="t" id="t19" style="left:9.6px;top:119px;font-size:10.5px;line-height:12px;height:12px;color:#444;transform:scaleX(0.9075);">Insert Shapes</span>
<span class="t" id="t20" style="left:105.2px;top:77px;font-size:9.5px;line-height:11px;height:11px;color:#333;transform:scaleX(0.9588);">Abc</span>
<span class="t" id="t21" style="left:153.5px;top:77px;font-size:9.5px;line-height:11px;height:11px;color:#333;transform:scaleX(0.9649);">Abc</span>
<span class="t" id="t22" style="left:201.6px;top:77px;font-size:9.5px;line-height:11px;height:11px;color:#333;transform:scaleX(0.9588);">Abc</span>
<span class="t" id="t23" style="left:182.1px;top:119px;font-size:10.5px;line-height:12px;height:12px;color:#444;transform:scaleX(0.8711);">Shape Styles</span>
<span class="t" id="t24" style="left:268.6px;top:60px;font-size:10.7px;line-height:12px;height:12px;color:#333;transform:scaleX(0.9131);">Shape Fill</span>
<span class="t" id="t25" style="left:268.6px;top:79px;font-size:10.7px;line-height:12px;height:12px;color:#333;transform:scaleX(0.9358);">Shape Outline</span>
<span class="t" id="t26" style="left:268.6px;top:99px;font-size:10.7px;line-height:12px;height:12px;color:#333;transform:scaleX(0.8951);">Shape Effects</span>
<span class="t" id="t27" style="left:366px;top:89px;font-size:10.7px;line-height:12px;height:12px;color:#333;transform:scaleX(0.9514);">Quick</span>
<span class="t" id="t28" style="left:361.3px;top:103px;font-size:10.7px;line-height:12px;height:12px;color:#333;transform:scaleX(0.8691);">Styles</span>
<span class="t" id="t29" style="left:355.5px;top:119px;font-size:10.5px;line-height:12px;height:12px;color:#444;transform:scaleX(0.9237);">WordArt Styles</span>
<span class="t" id="t30" style="left:464.6px;top:60px;font-size:10.7px;line-height:12px;height:12px;color:#A6A6A6;transform:scaleX(0.9371);">Bring Forward</span>
<span class="t" id="t31" style="left:464.6px;top:79px;font-size:10.7px;line-height:12px;height:12px;color:#A6A6A6;transform:scaleX(0.907);">Send Backward</span>
<span class="t" id="t32" style="left:464.6px;top:99px;font-size:10.7px;line-height:12px;height:12px;color:#333;transform:scaleX(0.9165);">Selection Pane</span>
<span class="t" id="t33" style="left:496px;top:119px;font-size:10.5px;line-height:12px;height:12px;color:#444;transform:scaleX(0.9368);">Arrange</span>
<span class="t" id="t34" style="left:605.7px;top:87px;font-size:10.7px;line-height:12px;height:12px;color:#333;transform:scaleX(0.8078);">Size</span>
<span class="t" id="t35" style="left:10px;top:146px;font-size:13px;line-height:15px;height:15px;color:#5a5a5a;-webkit-text-stroke:0;transform:scaleX(0.6773);">1</span>
<span class="t" id="t36" style="left:9.6px;top:177px;font-size:13px;line-height:15px;height:15px;color:#D0583B;-webkit-text-stroke:0;transform:scaleX(0.8432);">2</span>
<span class="t" id="t37" style="left:9.6px;top:208px;font-size:13px;line-height:15px;height:15px;color:#5a5a5a;-webkit-text-stroke:0;transform:scaleX(0.8432);">3</span>
<span class="t" id="t38" style="left:465.4px;top:145px;font-size:19px;line-height:21px;height:21px;color:#C4563F;-webkit-text-stroke:0;transform:scaleX(0.9198);">Format Picture</span>
<span class="t" id="t39" style="left:468.6px;top:177px;font-size:10.5px;line-height:12px;height:12px;color:#262626;font-weight:bold;-webkit-text-stroke:0;transform:scaleX(0.9313);">Shape Options</span>
<span class="t" id="t40" style="left:553.4px;top:177px;font-size:10.5px;line-height:12px;height:12px;color:#444;transform:scaleX(0.9559);">Text Options</span>
<span class="t" id="t41" style="left:484px;top:244px;font-size:10.5px;line-height:12px;height:12px;color:#BF3F1F;font-weight:bold;-webkit-text-stroke:0.2px;transform:scaleX(0.7909);">Fill</span>
<span class="t" id="t42" style="left:498.75px;top:269px;font-size:10.5px;line-height:12px;height:12px;color:#333;transform:scaleX(1.0654);"><u>N</u>o fill</span>
<span class="t" id="t43" style="left:498.75px;top:288px;font-size:10.5px;line-height:12px;height:12px;color:#333;transform:scaleX(0.9958);"><u>S</u>olid fill</span>
<span class="t" id="t44" style="left:498.75px;top:307px;font-size:10.5px;line-height:12px;height:12px;color:#333;transform:scaleX(0.9882);"><u>G</u>radient fill</span>
<span class="t" id="t45" style="left:498.75px;top:326px;font-size:10.5px;line-height:12px;height:12px;color:#333;transform:scaleX(0.992);"><u>P</u>icture or texture fill</span>
<span class="t" id="t46" style="left:498.75px;top:345px;font-size:10.5px;line-height:12px;height:12px;color:#333;transform:scaleX(0.9967);">P<u>a</u>ttern fill</span>
<span class="t" id="t47" style="left:498.75px;top:364px;font-size:10.5px;line-height:12px;height:12px;color:#333;transform:scaleX(0.9869);">Slide <u>b</u>ackground fill</span>
<span class="t" id="t48" style="left:492.4px;top:392px;font-size:10.5px;line-height:12px;height:12px;color:#333;transform:scaleX(0.9505);">Picture source</span>
<span class="t" id="t49" style="left:499.7px;top:414px;font-size:10.5px;line-height:12px;height:12px;color:#333;transform:scaleX(0.9306);">Inse<u>r</u>t...</span>
<span class="t" id="t50" style="left:555.7px;top:414px;font-size:10.5px;line-height:12px;height:12px;color:#B0B0B0;transform:scaleX(0.9851);"><u>C</u>lipboard</span>
<span class="t" id="t51" style="left:492.4px;top:442px;font-size:10.5px;line-height:12px;height:12px;color:#333;transform:scaleX(0.9317);">Text<u>u</u>re</span>
<span class="t" id="t52" style="left:491.8px;top:467px;font-size:10.5px;line-height:12px;height:12px;color:#333;transform:scaleX(0.934);"><u>T</u>ransparency</span>
<span class="t" id="t53" style="left:507.8px;top:488px;font-size:10.5px;line-height:12px;height:12px;color:#333;transform:scaleX(0.9618);">T<u>i</u>le picture as texture</span>
<span class="t" id="t54" style="left:500.6px;top:512px;font-size:10.5px;line-height:12px;height:12px;color:#333;transform:scaleX(0.996);">Offset <u>l</u>eft</span>
<span class="t" id="t55" style="left:500.6px;top:535px;font-size:10.5px;line-height:12px;height:12px;color:#333;transform:scaleX(1.0042);">Offset <u>r</u>ight</span>
<span class="t" id="t56" style="left:500.6px;top:559px;font-size:10.5px;line-height:12px;height:12px;color:#333;transform:scaleX(0.9968);">Offset t<u>o</u>p</span>
<span class="t" id="t57" style="left:500.6px;top:582px;font-size:10.5px;line-height:12px;height:12px;color:#333;transform:scaleX(1.0216);">Offset botto<u>m</u></span>
<span class="t" id="t58" style="left:613px;top:468px;font-size:10px;line-height:11px;height:11px;color:#333;transform:scaleX(0.8925);">0%</span>
<span class="t" id="t59" style="left:613px;top:512px;font-size:10px;line-height:11px;height:11px;color:#333;transform:scaleX(0.8925);">0%</span>
<span class="t" id="t60" style="left:613px;top:536px;font-size:10px;line-height:11px;height:11px;color:#333;transform:scaleX(0.8925);">0%</span>
<span class="t" id="t61" style="left:613px;top:559px;font-size:10px;line-height:11px;height:11px;color:#333;transform:scaleX(0.8925);">0%</span>
<span class="t" id="t62" style="left:613px;top:582px;font-size:10px;line-height:11px;height:11px;color:#333;transform:scaleX(0.8925);">0%</span>
<span class="t" id="t63" style="left:507.8px;top:603px;font-size:10.5px;line-height:12px;height:12px;color:#333;transform:scaleX(0.9539);">Rotate <u>w</u>ith shape</span>
<span class="t" id="t64" style="left:6px;top:642px;font-size:10.5px;line-height:12px;height:12px;color:#444;transform:scaleX(0.9325);">Slide 2 of 3</span>
<span class="t" id="t65" style="left:262px;top:642px;font-size:10.5px;line-height:12px;height:12px;color:#444;transform:scaleX(0.8966);">Notes</span>
<span class="t" id="t66" style="left:320px;top:642px;font-size:10.5px;line-height:12px;height:12px;color:#444;transform:scaleX(0.8864);">Comments</span>
<span class="t" id="t67" style="left:644.4px;top:642px;font-size:10.5px;line-height:12px;height:12px;color:#444;transform:scaleX(0.8184);">32%</span>
</body></html>
